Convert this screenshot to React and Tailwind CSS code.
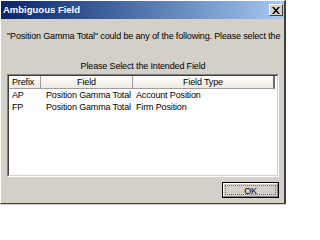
export default function App() {
  const rows = [
    { prefix: "AP", field: "Position Gamma Total", type: "Account Position" },
    { prefix: "FP", field: "Position Gamma Total", type: "Firm Position" },
  ];

  return (
    <div className="w-[286px] h-[205px] bg-[#d4d0c8] overflow-hidden">
      <div className="w-[286px] h-[204px] border-t border-l border-t-[#ffffff] border-l-[#ffffff] border-r-2 border-b border-r-[#404040] border-b-[#404040] flex flex-col font-['Liberation_Sans',Arial,sans-serif] text-[9px] tracking-[-0.15px] text-black">
        {/* title bar */}
        <div className="h-[18px] flex items-center justify-between pl-[2px] pr-[1px] bg-gradient-to-r from-[#0a246a] to-[#a6caf0]">
          <span className="text-white font-bold text-[9.5px] tracking-[0px] leading-none">Ambiguous Field</span>
          <button className="w-[14px] h-[12px] bg-[#d4d0c8] border border-t-white border-l-white border-r-[#404040] border-b-[#404040] flex items-center justify-center">
            <svg width="8" height="7" viewBox="0 0 8 7">
              <path d="M0 0h2l2 2.5L6 0h2L5 3.5 8 7H6L4 4.5 2 7H0l3-3.5z" fill="#000" />
            </svg>
          </button>
        </div>

        <div className="flex-1 flex flex-col pl-[6px] pr-[5px]">
          <p className="mt-[11px] whitespace-nowrap leading-[13px]">
            "Position Gamma Total" could be any of the following. Please select the
          </p>
          <p className="mt-[17px] text-center leading-[13px]">Please Select the Intended Field</p>

          <div className="mt-[1px] h-[103px] bg-white border border-t-[#808080] border-l-[#808080] border-r-white border-b-white">
            <div className="h-full border border-t-[#404040] border-l-[#404040] border-r-[#d4d0c8] border-b-[#d4d0c8]">
              <div className="flex h-[13px] leading-[12px]">
                <div className="w-[32px] pl-[3px] bg-gradient-to-b from-white to-[#ece9e0] border-r border-b border-r-[#a09e98] border-b-[#a09e98]">Prefix</div>
                <div className="w-[92px] text-center bg-gradient-to-b from-white to-[#ece9e0] border-r border-b border-r-[#a09e98] border-b-[#a09e98]">Field</div>
                <div className="w-[142px] text-center bg-gradient-to-b from-white to-[#ece9e0] border-r-2 border-b border-r-[#6e6c68] border-b-[#a09e98]">Field Type</div>
              </div>
              {rows.map((r) => (
                <div key={r.prefix} className="flex h-[12px] leading-[12px] first:mt-[2px]">
                  <div className="w-[32px] pl-[3px]">{r.prefix}</div>
                  <div className="w-[92px] pl-[5px] whitespace-nowrap">{r.field}</div>
                  <div className="w-[142px] pl-[3px] whitespace-nowrap">{r.type}</div>
                </div>
              ))}
            </div>
          </div>

          <div className="flex justify-end mt-[5px]">
            <button className="w-[57px] h-[16px] bg-[#d4d0c8] border border-black flex">
              <span className="w-full h-full p-[1px] border border-t-white border-l-white border-r-[#808080] border-b-[#808080] flex">
                <span className="w-full h-full leading-[11px] text-center border border-dotted border-[#6b6bb0]">OK</span>
              </span>
            </button>
          </div>
        </div>
      </div>
    </div>
  );
}
